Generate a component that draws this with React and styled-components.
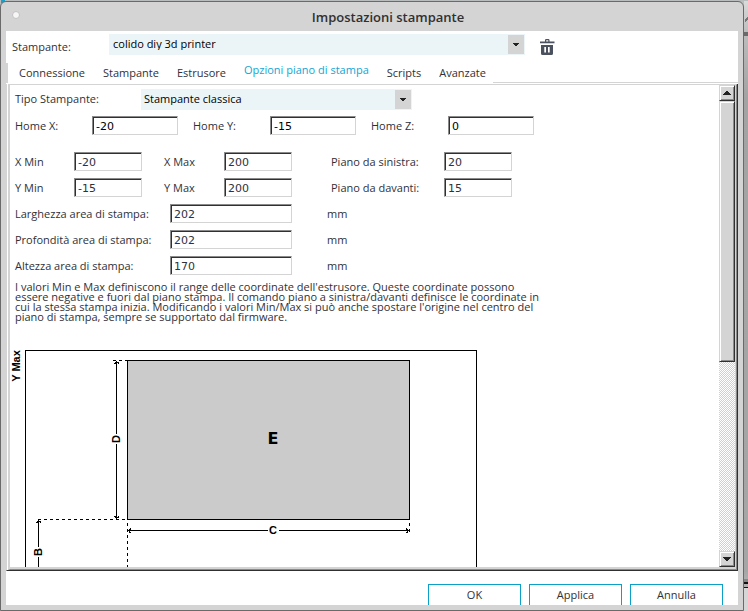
import React from "react";
import styled, { createGlobalStyle, css } from "styled-components";

const face = "#d4d4d4";
const shade = "#8a8a8a";
const dark = "#303030";
const ink = "#303138";
const accent = "#12a5d4";
const tint = "#ebf5f8";

const GlobalStyle = createGlobalStyle`
  *, *::before, *::after { box-sizing: border-box; }
  body {
    margin: 0;
    color: ${ink};
    font: 11px/13px "Open Sans", sans-serif;
    background: #b5b5b5;
  }
  button, input, select { font: inherit; color: inherit; margin: 0; }
`;

const Desktop = styled.div`
  display: grid;
  grid-template-columns: minmax(0, 1fr) 4px;
  grid-template-rows: minmax(0, 1fr);
  height: 100vh;
  padding-top: 1px;
  background: linear-gradient(#1ba0c8, #1ba0c8) 1px 0 / 4px 3px no-repeat, #b9bdbd;
  overflow: hidden;
`;

const Backdrop = styled.div`
  background:
    linear-gradient(#6b6b6b, #6b6b6b) 0 31px / 4px 4px no-repeat,
    linear-gradient(135deg, transparent 40%, #777 40% 65%, transparent 65%) 1px 14px / 4px 8px no-repeat,
    linear-gradient(#888 3px, #111 3px 5px, #b0b0b0 5px 8px, #111 8px 9px, #d6d6d6 9px) 0 578px / 4px 40px no-repeat,
    linear-gradient(#dadada, #bdbdbd 32px, #a3a3a3 96px, #a6a6a6 570px, #ccc);
`;

const Window = styled.section`
  display: flex;
  flex-direction: column;
  min-width: 0;
  padding: 0 5px 5px;
  border: 1px solid #6a6a6a;
  border-radius: 6px 6px 0 0;
  background: ${face};
`;

const TitleBar = styled.header`
  display: grid;
  grid-template-columns: 20px 1fr;
  align-items: center;
  flex: none;
  height: 29px;
`;

const WindowDot = styled.button`
  width: 8px;
  height: 8px;
  padding: 0;
  margin: 0 0 4px 6px;
  border: 1px solid #c2c2c2;
  border-radius: 50%;
  background: #f6f6f6;
`;

const Title = styled.h1`
  margin: 0;
  padding-left: 12px;
  text-align: center;
  color: #303030;
  font: 600 13px/18px "Open Sans", sans-serif;
`;

const Body = styled.div`
  display: flex;
  flex-direction: column;
  flex: 1;
  min-height: 0;
  background: #fff;
`;

const PrinterBar = styled.div`
  display: flex;
  align-items: flex-start;
  flex: none;
  height: 32px;
  padding: 3px 6px 0;
`;

const Label = styled.label`
  white-space: nowrap;
`;

const BarLabel = styled(Label)`
  flex: 0 0 97px;
  padding-top: 6px;
`;

const SelectBox = styled.span`
  display: grid;
  grid-template-columns: minmax(0, 1fr) 16px;
  flex: 0 1 ${(p) => p.$width}px;
  height: 21px;
  padding: 1px 1px 1px 0;
  background: ${tint};
`;

const Select = styled.select`
  grid-area: 1 / 1 / 2 / 3;
  appearance: none;
  min-width: 0;
  padding: 0 20px 2px ${(p) => p.$inset}px;
  border: 0;
  border-radius: 0;
  color: #000;
  background: transparent;
`;

const SelectArrow = styled.span`
  grid-area: 1 / 2 / 2 / 3;
  display: grid;
  place-items: center;
  background: ${face};
  pointer-events: none;
`;

const IconButton = styled.button`
  display: grid;
  margin: 5px 0 0 15px;
  padding: 0;
  border: 0;
  background: none;
`;

const TabList = styled.div`
  display: flex;
  flex: none;
  height: 20px;
`;

const TabStrip = styled.div`
  display: flex;
  gap: 18px;
  padding: 0 7px 0 11px;
  border-left: 2px solid ${face};
`;

const TabRule = styled.div`
  flex: 1;
  border-bottom: 1px solid ${face};
`;

const Tab = styled.button`
  padding: ${(p) => (p.$active ? "0 0 7px" : "0 0 2px")};
  border: 0;
  background: none;
  white-space: nowrap;
  ${(p) => p.$active && css`color: ${accent};`}
`;

const TabPanel = styled.div`
  display: flex;
  flex: 1;
  min-height: 0;
  margin-top: 1px;
  border: solid;
  border-width: 0 1px 1px;
  border-color: ${face} ${dark} ${dark} ${face};
`;

const PanelInner = styled.div`
  display: flex;
  flex: 1;
  min-width: 0;
  margin-left: 1px;
  border: solid;
  border-width: 1px 1px 1px 2px;
  border-color: ${face} ${shade} ${shade} ${face};
`;

const PanelWell = styled.div`
  display: flex;
  flex: 1;
  min-width: 0;
  border: solid ${face};
  border-width: 0 1px 2px 0;
`;

const ScrollArea = styled.div`
  flex: 1;
  min-width: 0;
  padding: 4px 0 0 5px;
  overflow: hidden;
`;

const TypeRow = styled.div`
  display: flex;
  align-items: center;
  margin-bottom: 6px;
`;

const TypeLabel = styled(Label)`
  flex: 0 0 126px;
  padding-bottom: 2px;
`;

const Fields = styled.div`
  display: grid;
  grid-template-columns: ${(p) => p.$columns};
  align-items: center;
  row-gap: 7px;
  margin-bottom: ${(p) => p.$after}px;
`;

const TextBox = styled.input`
  width: ${(p) => p.$width}px;
  height: 19px;
  padding: 1px 0 0 3px;
  border: 1px solid ${face};
  border-top-color: ${shade};
  border-left-color: ${shade};
  border-radius: 0;
  box-shadow: inset 1px 1px ${dark};
  background: #fff;
  color: ${(p) => (p.$strong ? "#000" : ink)};
  font-family: "DejaVu Sans", sans-serif;
  outline: 0;
`;

const Note = styled.p`
  max-width: 530px;
  margin: 0 0 23px;
  line-height: 10px;
`;

const Diagram = styled.svg`
  display: block;
  margin-left: -5px;
`;

const ScrollBar = styled.div`
  display: flex;
  flex-direction: column;
  flex: 0 0 16px;
  background: repeating-conic-gradient(#d4d0c8 0 25%, #fff 0 50%) 0 0 / 2px 2px;
`;

const raised = css`
  border: 1px solid;
  border-color: ${face} ${dark} ${dark} ${face};
  box-shadow: inset 1px 1px #fff, inset -1px -1px ${shade};
  background: ${face};
`;

const ScrollButton = styled.button`
  display: grid;
  place-items: center;
  flex: 0 0 16px;
  padding: 0;
  ${raised}
`;

const ScrollTrack = styled.div`
  flex: 1;
`;

const ScrollThumb = styled.div`
  height: 58%;
  ${raised}
`;

const Actions = styled.footer`
  display: flex;
  justify-content: flex-end;
  gap: 8px;
  flex: none;
  height: 34px;
  padding: 13px 15px 0 0;
`;

const ActionButton = styled.button`
  width: 93px;
  padding: 0 0 2px;
  border: 1px solid #0aa0c8;
  border-bottom: 0;
  background: #fff;
`;

const Triangle = ({ up }) => (
  <svg width="8" height="4" viewBox="0 0 8 4" shapeRendering="crispEdges" aria-hidden="true">
    <path d={up ? "M0 4h8v-1h-1v-1h-1v-1h-1v-1h-2v1h-1v1h-1v1h-1z" : "M0 0h8v1h-1v1h-1v1h-1v1h-2v-1h-1v-1h-1v-1h-1z"} fill="#222" />
  </svg>
);

const SmallTriangle = () => (
  <svg width="6" height="3" viewBox="0 0 6 3" shapeRendering="crispEdges" aria-hidden="true">
    <path d="M0 0h6v1h-1v1h-1v1h-2v-1h-1v-1h-1z" fill="#222" />
  </svg>
);

const Trash = () => (
  <svg width="15" height="16" viewBox="0 0 15 16" aria-hidden="true">
    <path d="M5 2.4V1.2Q5 0 6.200 0H8.300Q9.500 0 9.500 1.200V2.400H14.500V4.200H0V2.400zM6.200 2.400H8.300V1.200H6.200z" fill="#4c5160" fillRule="evenodd" />
    <path d="M1 6H13V14.500Q13 16 11.500 16H2.500Q1 16 1 14.500zM4.300 8V13.500H6V8zM8 8V13.500H9.700V8z" fill="#4c5160" fillRule="evenodd" />
  </svg>
);

function Dropdown({ id, width, inset, value }) {
  return (
    <SelectBox $width={width}>
      <Select id={id} $inset={inset} defaultValue={value}>
        <option>{value}</option>
      </Select>
      <SelectArrow><SmallTriangle /></SelectArrow>
    </SelectBox>
  );
}

function Field({ id, label, value, width, strong }) {
  return (
    <>
      <Label htmlFor={id}>{label}</Label>
      <TextBox id={id} defaultValue={value} $width={width} $strong={strong} />
    </>
  );
}

const tabs = ["Connessione", "Stampante", "Estrusore", "Opzioni piano di stampa", "Scripts", "Avanzate"];

const homes = [
  ["home-x", "Home X:", "-20"],
  ["home-y", "Home Y:", "-15"],
  ["home-z", "Home Z:", "0"],
];

const limits = [
  ["x-min", "X Min", "-20"],
  ["x-max", "X Max", "200"],
  ["left", "Piano da sinistra:", "20"],
  ["y-min", "Y Min", "-15"],
  ["y-max", "Y Max", "200"],
  ["front", "Piano da davanti:", "15"],
];

const areas = [
  ["area-width", "Larghezza area di stampa:", "202"],
  ["area-depth", "Profondità area di stampa:", "202"],
  ["area-height", "Altezza area di stampa:", "170"],
];

const BedDiagram = () => (
  <Diagram width="475" height="340" viewBox="-5 0 475 340" role="img" aria-label="Piano di stampa">
    <g fill="none" stroke="#000" shapeRendering="crispEdges">
      <rect x="10.5" y="5.5" width="451" height="320" />
      <rect x="112.5" y="15.5" width="282" height="159" fill="#cbcbcb" />
      <path d="M101.5 16v73M101.5 99v75M23.5 175v27M23.5 212v27M113 185.5h140M264 185.5h130" />
      <path d="M23 174.5h89M98 15.5h14M112.5 178v146M394.5 178v10" strokeDasharray="3 3" />
      <path d="M99 18.5h1v-1h3v1h1M99 171.5h1v1h3v-1h1M21 177.5h1v-1h3v1h1M115.5 183v1h-1v3h1v1M391.5 183v1h1v3h-1v1" />
    </g>
    <g fontFamily="Liberation Sans, sans-serif" fontWeight="bold" fontSize="11" textAnchor="middle">
      <text transform="translate(5 21) rotate(-90)">Y Max</text>
      <text transform="translate(105 94) rotate(-90)">D</text>
      <text transform="translate(27 207) rotate(-90)">B</text>
      <text x="258" y="189">C</text>
      <text x="258" y="99" fontSize="16" fontFamily="DejaVu Sans, sans-serif">E</text>
    </g>
  </Diagram>
);

export default function App() {
  return (
    <>
      <GlobalStyle />
      <Desktop>
        <Window>
          <TitleBar>
            <WindowDot aria-label="Chiudi" />
            <Title>Impostazioni stampante</Title>
          </TitleBar>
          <Body>
            <PrinterBar>
              <BarLabel htmlFor="printer">Stampante:</BarLabel>
              <Dropdown id="printer" width={416} inset={4} value="colido diy 3d printer" />
              <IconButton aria-label="Elimina"><Trash /></IconButton>
            </PrinterBar>
            <TabList>
              <TabStrip role="tablist">
                {tabs.map((name, i) => (
                  <Tab key={name} role="tab" aria-selected={i === 3} $active={i === 3}>{name}</Tab>
                ))}
              </TabStrip>
              <TabRule />
            </TabList>
            <TabPanel role="tabpanel">
              <PanelInner>
                <PanelWell>
                  <ScrollArea>
                    <TypeRow>
                      <TypeLabel htmlFor="type">Tipo Stampante:</TypeLabel>
                      <Dropdown id="type" width={271} inset={3} value="Stampante classica" />
                    </TypeRow>
                    <Fields $columns="77px 101px 77px 101px 77px 1fr" $after={17}>
                      {homes.map(([id, label, value]) => (
                        <Field key={id} id={id} label={label} value={value} width={86} strong />
                      ))}
                    </Fields>
                    <Fields $columns="59px 90px 60px 107px 113px 1fr" $after={7}>
                      {limits.map(([id, label, value]) => (
                        <Field key={id} id={id} label={label} value={value} width={68} />
                      ))}
                    </Fields>
                    <Fields $columns="155px 157px 1fr" $after={7}>
                      {areas.map(([id, label, value]) => (
                        <React.Fragment key={id}>
                          <Field id={id} label={label} value={value} width={122} />
                          <span>mm</span>
                        </React.Fragment>
                      ))}
                    </Fields>
                    <Note>
                      I valori Min e Max definiscono il range delle coordinate dell'estrusore. Queste coordinate possono essere negative e fuori dal piano stampa. Il comando piano a sinistra/davanti definisce le coordinate in cui la stessa stampa inizia. Modificando i valori Min/Max si può anche spostare l'origine nel centro del piano di stampa, sempre se supportato dal firmware.
                    </Note>
                    <BedDiagram />
                  </ScrollArea>
                  <ScrollBar>
                    <ScrollButton aria-label="Su"><Triangle up /></ScrollButton>
                    <ScrollTrack><ScrollThumb /></ScrollTrack>
                    <ScrollButton aria-label="Giù"><Triangle /></ScrollButton>
                  </ScrollBar>
                </PanelWell>
              </PanelInner>
            </TabPanel>
            <Actions>
              <ActionButton>OK</ActionButton>
              <ActionButton>Applica</ActionButton>
              <ActionButton>Annulla</ActionButton>
            </Actions>
          </Body>
        </Window>
        <Backdrop />
      </Desktop>
    </>
  );
}
